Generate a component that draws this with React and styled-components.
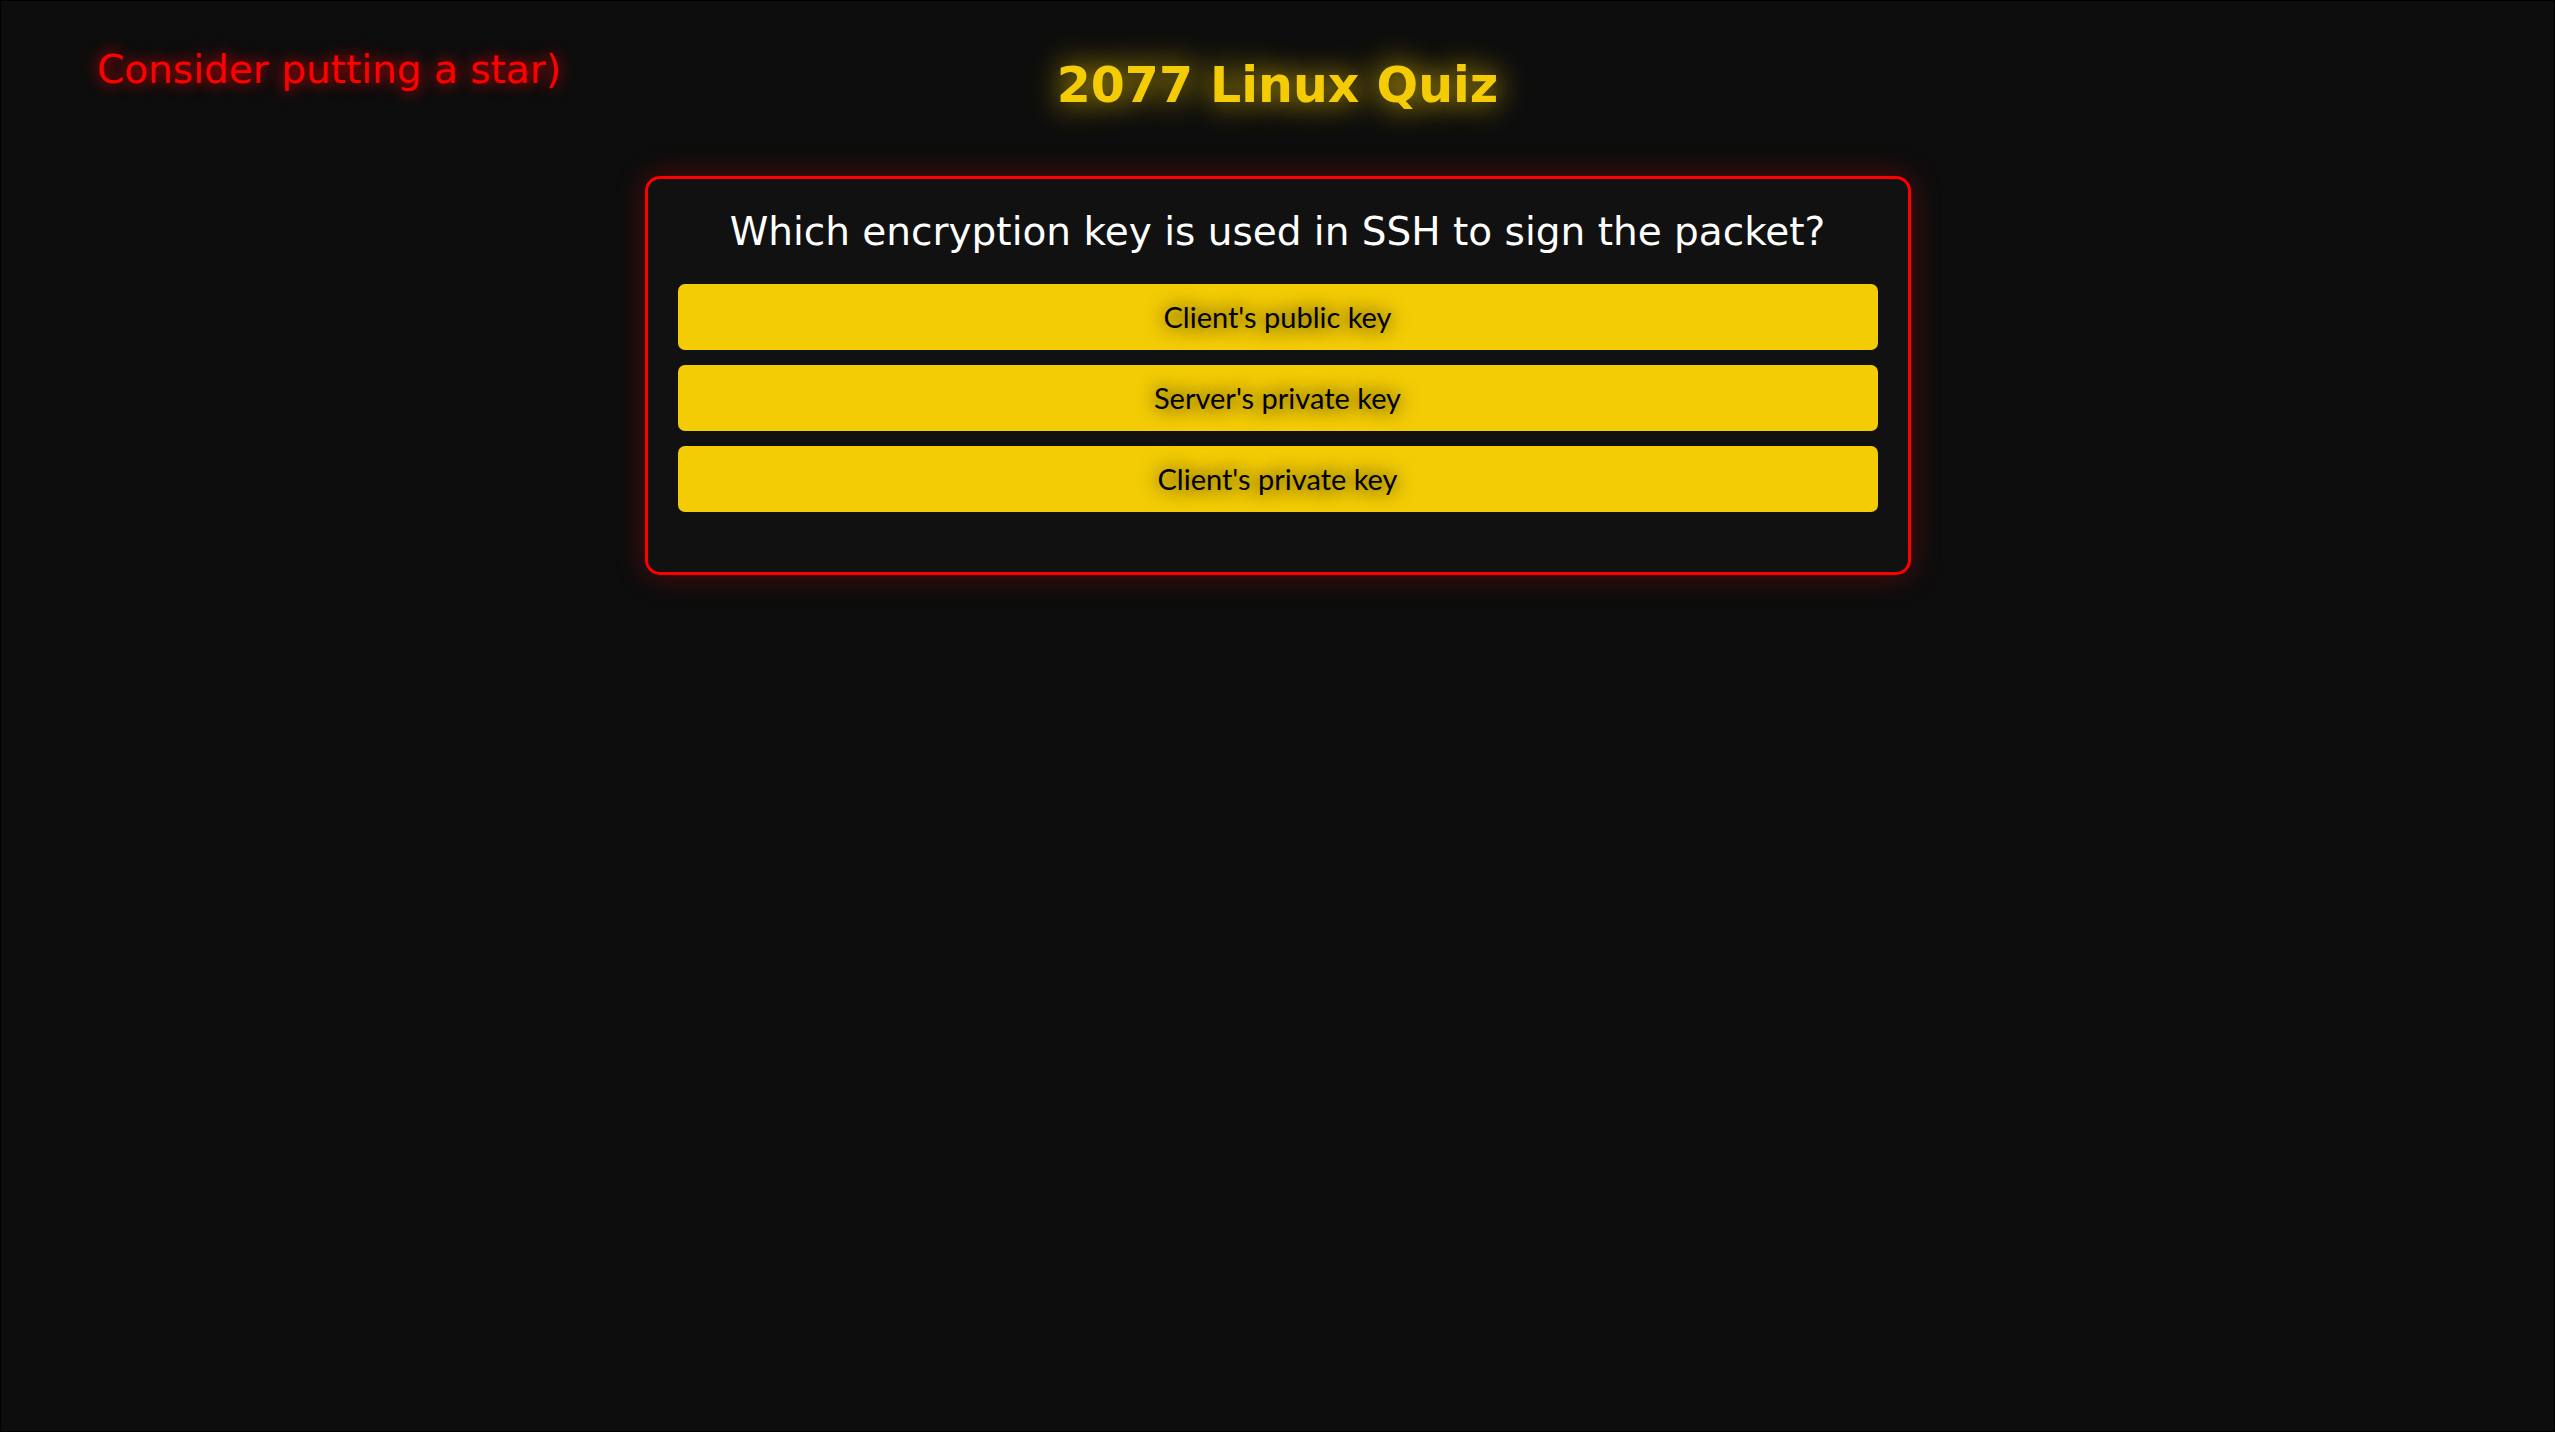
import React, { useState } from "react";
import styled, { createGlobalStyle, ThemeProvider } from "styled-components";

const theme = {
  background: "#0d0d0d",
  panel: "#111111",
  yellow: "#f4cc05",
  red: "#ff0000",
  display: '"DejaVu Sans", Verdana, sans-serif',
  text: 'Lato, "Noto Sans", sans-serif',
};

const GlobalStyle = createGlobalStyle`
  * {
    box-sizing: border-box;
  }

  body {
    margin: 0;
    background-color: ${theme.background};
    font-family: ${theme.text};
  }
`;

const Page = styled.div`
  min-height: 100vh;
  border: 1px solid black;
  padding-bottom: 60px;
`;

const Header = styled.header`
  display: grid;
  grid-template-columns: 1fr auto 1fr;
  align-items: start;
  padding: 47px 96px 60px;
`;

const StarLink = styled.a`
  justify-self: start;
  font-family: ${(props) => props.theme.display};
  font-size: 39px;
  line-height: 44px;
  color: ${(props) => props.theme.red};
  text-decoration: none;
  text-shadow: 0 0 15px ${(props) => props.theme.red};
`;

const Title = styled.h1`
  margin: 8px 0 0;
  font-family: ${(props) => props.theme.display};
  font-size: 49px;
  font-weight: bold;
  line-height: 60px;
  color: ${(props) => props.theme.yellow};
  text-shadow: 0 0 30px ${(props) => props.theme.yellow};
`;

const QuizCard = styled.main`
  width: calc(100% - 60px);
  max-width: 1266px;
  margin: 0 auto;
  padding: 30px;
  border: 3px solid ${(props) => props.theme.red};
  border-radius: 15px;
  background-color: ${(props) => props.theme.panel};
  box-shadow: 0 0 30px rgba(255, 0, 0, 0.3);
`;

const Question = styled.h2`
  margin: 0 0 30px;
  font-family: ${(props) => props.theme.display};
  font-size: 39px;
  font-weight: normal;
  line-height: 45px;
  text-align: center;
  color: white;
`;

const Answers = styled.div`
  display: flex;
  flex-direction: column;
  gap: 15px;
  margin-bottom: 30px;
`;

const AnswerButton = styled.button`
  padding: 15px;
  border: none;
  border-radius: 7px;
  background-color: ${(props) => props.theme.yellow};
  font-family: ${(props) => props.theme.text};
  font-size: 29px;
  line-height: 36px;
  color: black;
  text-shadow: 0 0 20px black;
  cursor: pointer;
  opacity: ${(props) => (props.$dimmed ? 0.6 : 1)};
`;

const question = {
  text: "Which encryption key is used in SSH to sign the packet?",
  answers: ["Client's public key", "Server's private key", "Client's private key"],
};

export default function App() {
  const [selected, setSelected] = useState(null);

  return (
    <ThemeProvider theme={theme}>
      <GlobalStyle />
      <Page>
        <Header>
          <StarLink href="#star">Consider putting a star)</StarLink>
          <Title>2077 Linux Quiz</Title>
        </Header>
        <QuizCard>
          <Question>{question.text}</Question>
          <Answers>
            {question.answers.map((answer) => (
              <AnswerButton
                key={answer}
                type="button"
                $dimmed={selected !== null && selected !== answer}
                onClick={() => setSelected(answer)}
              >
                {answer}
              </AnswerButton>
            ))}
          </Answers>
        </QuizCard>
      </Page>
    </ThemeProvider>
  );
}
